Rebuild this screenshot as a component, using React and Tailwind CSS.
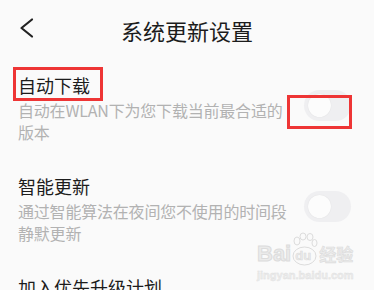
import React from "react";

const FONT = { fontFamily: '"Noto Sans CJK SC", "Noto Sans", sans-serif' };
const LATIN = { fontFamily: '"Liberation Sans", sans-serif' };

function Toggle() {
  return (
    <div className="mt-[18px] mr-[23px] flex h-[31px] w-[47px] shrink-0 items-center rounded-full bg-[#efeff1] px-[4px]">
      <div className="h-[23px] w-[23px] rounded-full bg-[#fcfcfc] shadow-[0_0_1px_rgba(0,0,0,0.12)]" />
    </div>
  );
}

function SettingRow({ title, lines }) {
  return (
    <div className="flex items-start justify-between pt-[12px] pb-[18px]">
      <div className="pl-[18px]">
        <div className="text-[18px] leading-[27px] text-[#1c1c1c]">{title}</div>
        {lines && (
          <div className="whitespace-nowrap text-[16px] leading-[22px] tracking-[-0.2px] text-[#b2b2b2]">
            {lines[0]}
            <br />
            {lines[1]}
          </div>
        )}
      </div>
      {lines && <Toggle />}
    </div>
  );
}

export default function App() {
  return (
    <div className="relative h-[290px] w-[374px] overflow-hidden bg-[#fafafa]" style={FONT}>
      <header className="relative flex h-[60px] items-center justify-center">
        <svg className="absolute left-[18px] top-[17px]" width="18" height="22" viewBox="0 0 18 22">
          <polyline points="14,2.5 3.5,11 14,19.5" fill="none" stroke="#222" strokeWidth="2.2" strokeLinecap="round" strokeLinejoin="round" />
        </svg>
        <h1 className="text-[22px] leading-[30px] text-[#1c1c1c]">系统更新设置</h1>
      </header>

      <SettingRow title="自动下载" lines={["自动在WLAN下为您下载当前最合适的", "版本"]} />
      <SettingRow title="智能更新" lines={["通过智能算法在夜间您不使用的时间段", "静默更新"]} />
      <SettingRow title="加入优先升级计划" />

      {/* annotation boxes */}
      <div className="absolute left-[13px] top-[67px] h-[34px] w-[90px] border-[3px] border-[#ee3535]" />
      <div className="absolute left-[287px] top-[95px] h-[34px] w-[65px] border-[3px] border-[#ee3535]" />

      {/* watermark */}
      <div className="absolute left-[257px] top-[232px] whitespace-nowrap text-[#ebebeb]">
        <div className="flex flex-nowrap items-end">
          <span className="shrink-0 text-[22px] font-bold leading-[24px] [-webkit-text-stroke:1px_#dcdcdc]" style={LATIN}>Bai</span>
          <div className="relative h-[34px] w-[27px] shrink-0">
            <svg className="absolute left-0 top-0" width="27" height="34" viewBox="0 0 27 34">
              <g fill="none" stroke="#dcdcdc" strokeWidth="1">
                <ellipse cx="6" cy="9" rx="3" ry="4" />
                <ellipse cx="12" cy="4.5" rx="3" ry="3.5" />
                <ellipse cx="19" cy="5" rx="3" ry="3.5" />
                <ellipse cx="23.5" cy="11" rx="2.5" ry="3.5" />
                <ellipse cx="13.5" cy="24" rx="11.5" ry="9" />
              </g>
            </svg>
            <span className="absolute left-[4px] top-[17px] text-[13px] font-bold leading-[14px] [-webkit-text-stroke:0.6px_#dcdcdc]" style={LATIN}>du</span>
          </div>
          <span className="ml-[1px] shrink-0 text-[17px] font-bold leading-[24px] [-webkit-text-stroke:0.6px_#dcdcdc]">经验</span>
        </div>
        <div className="mt-[3px] text-[11px] font-bold leading-[13px] text-[#ededed] [-webkit-text-stroke:0.4px_#e0e0e0]" style={LATIN}>
          jingyan.baidu.com
        </div>
      </div>
    </div>
  );
}
